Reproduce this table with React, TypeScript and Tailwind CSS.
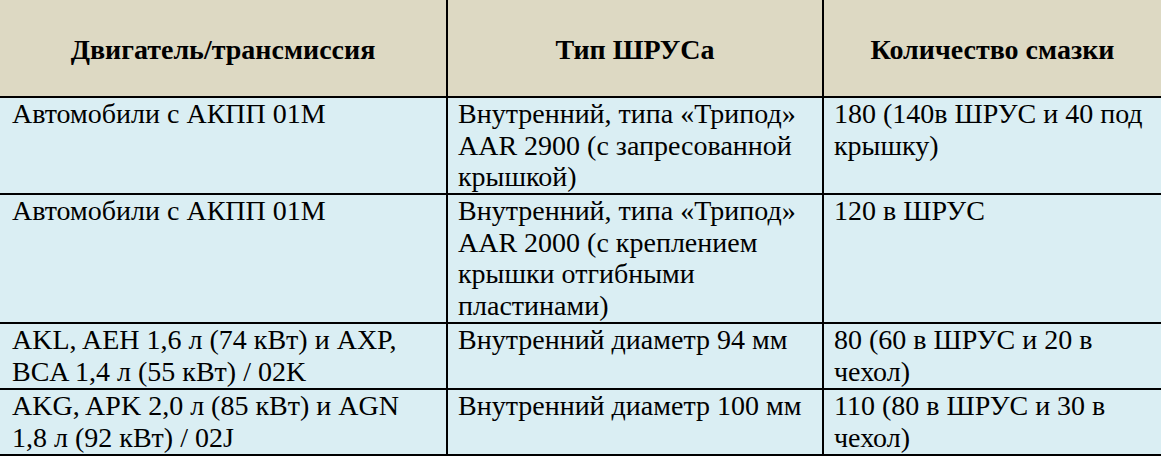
import React, { useEffect, useState } from "react";

const rows: string[][][] = [
  [
    ["Автомобили с АКПП 01М"],
    ["Внутренний, типа «Трипод»", "AAR 2900 (с запресованной", "крышкой)"],
    ["180 (140в ШРУС и 40 под", "крышку)"],
  ],
  [
    ["Автомобили с АКПП 01М"],
    ["Внутренний, типа «Трипод»", "AAR 2000 (с креплением", "крышки отгибными", "пластинами)"],
    ["120 в ШРУС"],
  ],
  [
    ["AKL, AEH 1,6 л (74 кВт) и AXP,", "BCA 1,4 л (55 кВт) / 02K"],
    ["Внутренний диаметр 94 мм"],
    ["80 (60 в ШРУС и 20 в", "чехол)"],
  ],
  [
    ["AKG, APK 2,0 л (85 кВт) и AGN", "1,8 л (92 кВт) / 02J"],
    ["Внутренний диаметр 100 мм"],
    ["110 (80 в ШРУС и 30 в", "чехол)"],
  ],
];

const rowH = ["h-[97px]", "h-[129px]", "h-[66px]", "h-[66px]"];
const colW = [
  "w-[446px] pl-[12px]",
  "w-[376px] pl-[10px] border-l-2 border-black",
  "flex-1 pl-[10px] border-l-2 border-black",
];
const headW = ["w-[446px]", "w-[376px] border-l-2 border-black", "flex-1 border-l-2 border-black"];

export default function App() {
  const [, setTick] = useState(0);
  useEffect(() => {
    const fs = (document as any).fonts;
    if (fs && fs.load) {
      Promise.all([
        fs.load('28px "Liberation Serif"', "Автомобили AKL"),
        fs.load('bold 28px "Liberation Serif"', "Двигатель"),
      ])
        .then(() => setTick((t) => t + 1))
        .catch(() => {});
    }
  }, []);

  return (
    <div className="flex flex-col w-[1161px] h-[456px] overflow-hidden bg-white text-black font-['Liberation_Serif','Times_New_Roman',Tinos,serif]">
      <div className="flex h-[98px] bg-[#ddd9c3] border-b-2 border-black text-[28px] leading-[32px] font-bold">
        {["Двигатель/трансмиссия", "Тип ШРУСа", "Количество смазки"].map((h, i) => (
          <div
            key={h}
            className={`${headW[i]} flex items-center justify-center pt-[4px] font-['Liberation_Serif','Times_New_Roman',Tinos,serif]`}
          >
            {h}
          </div>
        ))}
      </div>
      {rows.map((r, ri) => (
        <div
          key={ri}
          className={`flex ${rowH[ri]} bg-[#daeef3] border-b-2 border-black text-[28px] leading-[31.5px]`}
        >
          {r.map((lines, ci) => (
            <div
              key={ci}
              className={`${colW[ci]} whitespace-nowrap font-['Liberation_Serif','Times_New_Roman',Tinos,serif]`}
            >
              {lines.map((l, li) => (
                <div key={li}>{l}</div>
              ))}
            </div>
          ))}
        </div>
      ))}
    </div>
  );
}
